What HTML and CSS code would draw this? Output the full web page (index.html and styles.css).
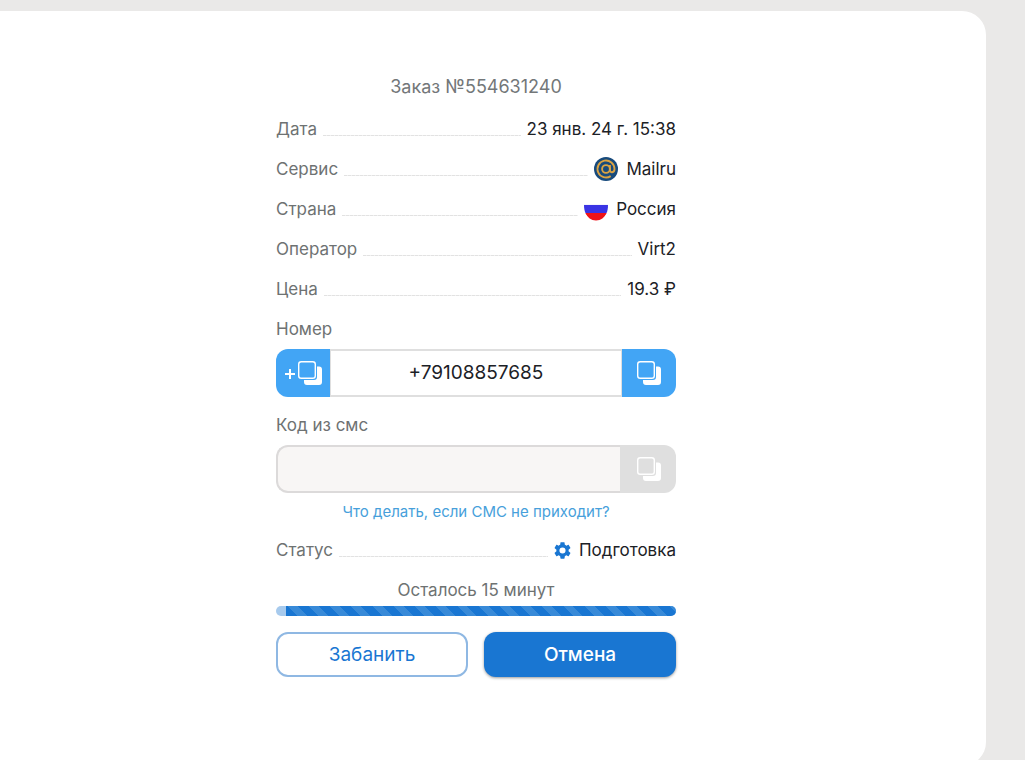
FILE: index.html
```html
<!DOCTYPE html>
<html lang="ru">
<head>
<meta charset="utf-8">
<meta name="viewport" content="width=device-width, initial-scale=1">
<title>Заказ №554631240</title>
<link rel="stylesheet" href="styles.css">
</head>
<body>
<svg class="sprite" aria-hidden="true">
  <symbol id="copy" viewBox="0 0 26 26">
    <path d="M20 6.500h2a3 3 0 0 1 3 3V22a3 3 0 0 1-3 3H10a3 3 0 0 1-3-3v-2h10a3 3 0 0 0 3-3z" fill="currentColor"/>
    <rect x="1.700" y="1.700" width="16.600" height="16.600" rx="2.600" fill="none" stroke="currentColor" stroke-width="1.400"/>
  </symbol>
</svg>
<main class="panel">
  <section class="order">
    <h1 class="title">Заказ №554631240</h1>
    <dl class="details">
      <div class="row"><dt>Дата</dt><dd>23 янв. 24 г. 15:38</dd></div>
      <div class="row"><dt>Сервис</dt><dd>
        <svg class="icon" viewBox="0 0 24 24" aria-hidden="true">
          <circle cx="12" cy="12" r="12" fill="#174a7c"/>
          <circle cx="12" cy="12" r="3.900" fill="none" stroke="#dba343" stroke-width="1.900"/>
          <path d="M15.900 8.100v4.900c0 3.200 4.600 3 4.600-1A8.500 8.500 0 1 0 16.700 19.100" fill="none" stroke="#dba343" stroke-width="1.900"/>
        </svg>Mailru</dd></div>
      <div class="row"><dt>Страна</dt><dd>
        <svg class="icon" viewBox="0 0 24 24" aria-hidden="true">
          <path d="M0 7h24v1H0z" fill="#f4f4fc"/>
          <path d="M0 8h24c0 3.400-.5 6-1.500 8h-21C.5 14 0 11.400 0 8z" fill="#3a34e4"/>
          <path d="M1.500 16h21a12 12 0 0 1-21 0z" fill="#ee1218"/>
          <path d="M1.500 16h21C20.500 20.500 17 23.500 12 23.500S3.500 20.500 1.500 16z" fill="#ee1218"/>
        </svg>Россия</dd></div>
      <div class="row"><dt>Оператор</dt><dd>Virt2</dd></div>
      <div class="row"><dt>Цена</dt><dd>19.3 ₽</dd></div>
    </dl>
    <label class="label" for="phone">Номер</label>
    <div class="field">
      <button class="copy copy-left" type="button" aria-label="Копировать с плюсом">
        <svg class="plus" viewBox="0 0 10 10" aria-hidden="true"><path d="M5 0v10M0 5h10" stroke="currentColor" stroke-width="2"/></svg>
        <svg class="copy-icon" aria-hidden="true"><use href="#copy"/></svg>
      </button>
      <input class="input" id="phone" type="text" value="+79108857685" readonly>
      <button class="copy copy-right" type="button" aria-label="Копировать номер"><svg class="copy-icon" aria-hidden="true"><use href="#copy"/></svg></button>
    </div>
    <label class="label" for="code">Код из смс</label>
    <div class="field field-code">
      <input class="input input-code" id="code" type="text" disabled>
      <button class="copy copy-right" type="button" aria-label="Копировать код" disabled><svg class="copy-icon" aria-hidden="true"><use href="#copy"/></svg></button>
    </div>
    <a class="help" href="#">Что делать, если СМС не приходит?</a>
    <dl class="details">
      <div class="row"><dt>Статус</dt><dd>
        <svg class="gear" viewBox="2 2 20 20" aria-hidden="true"><path fill="#1976d2" d="M19.140 12.940c.04-.3.06-.61.06-.94 0-.32-.02-.64-.07-.94l2.030-1.580c.18-.14.23-.41.12-.61l-1.920-3.320c-.12-.22-.37-.29-.59-.22l-2.390.96c-.5-.38-1.030-.7-1.620-.94l-.36-2.540c-.04-.24-.24-.41-.48-.41h-3.840c-.24 0-.43.17-.47.41l-.36 2.540c-.59.24-1.130.57-1.620.94l-2.390-.96c-.22-.08-.47 0-.59.22L2.740 8.870c-.12.21-.08.47.12.61l2.030 1.580c-.05.3-.09.63-.09.94s.02.64.07.94l-2.030 1.580c-.18.14-.23.41-.12.61l1.920 3.320c.12.22.37.29.59.22l2.390-.96c.5.38 1.030.7 1.620.94l.36 2.540c.05.24.24.41.48.41h3.840c.24 0 .44-.17.47-.41l.36-2.540c.59-.24 1.130-.56 1.620-.94l2.390.96c.22.08.47 0 .59-.22l1.920-3.320c.12-.22.07-.47-.12-.61zM12 15.600A3.600 3.600 0 1 1 12 8.400a3.600 3.600 0 0 1 0 7.200z"/></svg>Подготовка</dd></div>
    </dl>
    <p class="left">Осталось 15 минут</p>
    <div class="progress" role="progressbar" aria-label="Осталось времени" aria-valuenow="98"><div class="bar"></div></div>
    <div class="actions">
      <button class="action ban" type="button">Забанить</button>
      <button class="action cancel" type="button">Отмена</button>
    </div>
  </section>
</main>
</body>
</html>
```
FILE: styles.css
```css
* { box-sizing: border-box; }
body {
  margin: 0;
  height: 100vh;
  overflow: hidden;
  padding: 11px 39px 0 0;
  background: #eae9e8;
  color: #1c2126;
  font: 17px/24px Inter, sans-serif;
}
.sprite { position: absolute; width: 0; height: 0; }
.panel {
  min-height: calc(100vh - 5px);
  padding: 64px 34px 64px 0;
  background: #fff;
  border-radius: 0 24px 24px 0;
}
.order {
  display: flex;
  flex-direction: column;
  max-width: 400px;
  margin: 0 auto;
}
.title {
  margin: 0 0 18px;
  color: #737779;
  font-size: 18px;
  font-weight: 400;
  line-height: 24px;
  text-align: center;
}
.details {
  display: flex;
  flex-direction: column;
  gap: 16px;
  margin: 0 0 16px;
}
.row {
  display: flex;
  align-items: center;
  gap: 6px;
}
.row::before {
  content: "";
  order: 1;
  flex: 1;
  height: 1px;
  margin-top: 12px;
  background: repeating-linear-gradient(90deg, #e2e2e2 0 3px, #f0f0f0 3px 4px);
}
dt, .label, .left { color: #6e7272; }
dd {
  order: 2;
  display: flex;
  align-items: center;
  gap: 8px;
  margin: 0;
}
.icon { width: 24px; height: 24px; }
.gear { width: 17px; height: 17px; }
.label { margin-bottom: 8px; }
.field { display: flex; height: 48px; margin-bottom: 16px; }
.field-code { margin-bottom: 7px; }
.input {
  flex: 1;
  min-width: 0;
  padding: 0 12px;
  border: solid #dfdfdf;
  border-width: 2px 1px;
  background: #fff;
  color: #1c2126;
  font: 19px/24px Inter, sans-serif;
  text-align: center;
}
.input-code {
  border-width: 2px 0 2px 2px;
  border-color: #dcdada;
  border-radius: 12px 0 0 12px;
  background: #f8f6f5;
}
.copy {
  display: flex;
  align-items: center;
  justify-content: center;
  gap: 2px;
  width: 54px;
  padding: 0;
  border: 0;
  background: #42a5f5;
  color: #fff;
}
.copy-left { padding-left: 2px; border-radius: 12px 0 0 12px; }
.copy-right { border-radius: 0 12px 12px 0; }
.copy:disabled { width: 56px; padding-left: 2px; background: #dfdfdf; }
.copy-icon { width: 26px; height: 26px; }
.plus { width: 10px; height: 10px; margin-top: 2px; }
.help {
  align-self: center;
  margin-bottom: 14px;
  color: #479fdb;
  font-size: 15px;
  text-decoration: none;
}
.left { margin: 0 0 4px; text-align: center; }
.progress {
  height: 10px;
  margin-bottom: 16px;
  padding-left: 10px;
  overflow: hidden;
  border-radius: 5px;
  background: #a7caed;
}
.bar {
  height: 100%;
  background: repeating-linear-gradient(45deg, #1976d2 0 8px, #388ad8 8px 15px);
}
.actions { display: grid; grid-template-columns: 1fr 1fr; gap: 16px; }
.action {
  height: 45px;
  border: 0;
  border-radius: 12px;
  font: 500 19px/24px Inter, sans-serif;
}
.ban { border: 2px solid #8fb8e3; background: #fff; color: #1976d2; font-weight: 400; }
.cancel { background: #1976d2; color: #fff; box-shadow: 0 1px 3px #0006; }
```
